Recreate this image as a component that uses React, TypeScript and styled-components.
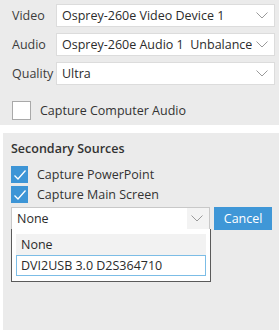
import styled, { createGlobalStyle } from 'styled-components'

const GlobalStyle = createGlobalStyle`
  body {
    margin: 0;
    background: #ffffff;
    font-family: "Open Sans", "Noto Sans", sans-serif;
    color: #333333;
  }
`

const Chevron = () => (
  <svg width="12" height="7" viewBox="0 0 12 7">
    <path d="M0.5 0.5 L6 6 L11.5 0.5" fill="none" stroke="#9a9a9a" strokeWidth="1" />
  </svg>
)

const Check = () => (
  <svg width="14" height="12" viewBox="0 0 14 12">
    <path d="M1.5 6.5 L5 10 L12.5 1.5" fill="none" stroke="#ffffff" strokeWidth="1.3" />
  </svg>
)

const sources = [
  { label: 'Video', value: 'Osprey-260e Video Device 1' },
  { label: 'Audio', value: 'Osprey-260e Audio 1  Unbalanced' },
  { label: 'Quality', value: 'Ultra' },
]

const App = () => {
  return (
    <Page>
      <GlobalStyle />
      <TopPanel>
        <FieldGrid>
          {sources.map((s) => (
            <Field key={s.label}>
              <Label>{s.label}</Label>
              <Select>
                <SelectText>{s.value}</SelectText>
                <Arrow>
                  <Chevron />
                </Arrow>
              </Select>
            </Field>
          ))}
        </FieldGrid>
        <CheckRow $big>
          <Box $checked={false} $size={19} />
          <CheckLabel>Capture Computer Audio</CheckLabel>
        </CheckRow>
      </TopPanel>

      <BottomPanel>
        <Heading>Secondary Sources</Heading>
        <CheckRow>
          <Box $checked $size={17}>
            <Check />
          </Box>
          <CheckLabel>Capture PowerPoint</CheckLabel>
        </CheckRow>
        <CheckRow>
          <Box $checked $size={17}>
            <Check />
          </Box>
          <CheckLabel>Capture Main Screen</CheckLabel>
        </CheckRow>
        <PickRow>
          <PickWrap>
            <Select $open>
              <SelectText>None</SelectText>
              <Arrow $open>
                <Chevron />
              </Arrow>
            </Select>
            <Menu>
              <MenuItem>None</MenuItem>
              <MenuItem $selected>DVI2USB 3.0 D2S364710</MenuItem>
            </Menu>
          </PickWrap>
          <Button>Cancel</Button>
        </PickRow>
      </BottomPanel>
    </Page>
  )
}

export default App

const Page = styled.div`
  width: 279px;
  height: 333px;
  display: flex;
  flex-direction: column;
  font-size: 12.5px;
`

const TopPanel = styled.div`
  background: #ebebeb;
  padding: 4px 4px 0 12px;
  height: 125px;
  box-sizing: border-box;
  display: flex;
  flex-direction: column;
`

const FieldGrid = styled.div`
  display: flex;
  flex-direction: column;
  gap: 6px;
`

const Field = styled.div`
  display: grid;
  grid-template-columns: 44px 1fr;
  align-items: center;
`

const Label = styled.div`
  color: #3c3c3c;
  font-size: 12.5px;
`

const Select = styled.div<{ $open?: boolean }>`
  display: flex;
  align-items: stretch;
  height: 23px;
  background: #ffffff;
  border: 1px solid ${(p) => (p.$open ? '#c8c8c8' : '#dcdcdc')};
  box-sizing: border-box;
  overflow: hidden;
`

const SelectText = styled.div`
  flex: 1;
  padding-left: 5px;
  line-height: 21px;
  white-space: pre;
  overflow: hidden;
  color: #2b2b2b;
`

const Arrow = styled.div<{ $open?: boolean }>`
  width: 20px;
  display: flex;
  align-items: center;
  justify-content: center;
  padding-right: 2px;
  background: ${(p) => (p.$open ? '#f3f3f3' : '#ffffff')};
`

const CheckRow = styled.div<{ $big?: boolean }>`
  display: flex;
  align-items: center;
  gap: 9px;
  margin-top: ${(p) => (p.$big ? '15px' : '3px')};
  height: ${(p) => (p.$big ? '20px' : '17px')};
`

const Box = styled.div<{ $checked: boolean; $size: number }>`
  width: ${(p) => p.$size}px;
  height: ${(p) => p.$size}px;
  box-sizing: border-box;
  display: flex;
  align-items: center;
  justify-content: center;
  background: ${(p) => (p.$checked ? '#3d95d6' : '#ffffff')};
  border: 1px solid ${(p) => (p.$checked ? '#3d95d6' : '#a9a9a9')};
`

const CheckLabel = styled.span`
  color: #333333;
  font-size: 12.5px;
`

const BottomPanel = styled.div`
  margin: 8px 0 3px 3px;
  flex: 1;
  background: #ebebeb;
  padding: 7px 7px 0 8px;
  display: flex;
  flex-direction: column;
`

const Heading = styled.div`
  font-weight: 600;
  font-size: 12.5px;
  color: #333333;
  margin-bottom: 6px;
`

const PickRow = styled.div`
  display: flex;
  gap: 4px;
  margin-top: 4px;
`

const PickWrap = styled.div`
  position: relative;
  width: 200px;
`

const Menu = styled.div`
  position: absolute;
  top: 22px;
  left: 0;
  width: 200px;
  box-sizing: border-box;
  background: #ffffff;
  border: 1px solid #5a5a5a;
  border-top: none;
  padding: 5px 4px 5px 4px;
  display: flex;
  flex-direction: column;
`

const MenuItem = styled.div<{ $selected?: boolean }>`
  height: 21px;
  line-height: 19px;
  padding-left: 4px;
  box-sizing: border-box;
  color: #2b2b2b;
  background: ${(p) => (p.$selected ? '#ffffff' : '#f2f2f2')};
  border: 1px solid ${(p) => (p.$selected ? '#7cbde6' : '#f2f2f2')};
`

const Button = styled.button`
  width: 58px;
  height: 23px;
  border: none;
  background: #3f97d7;
  color: #ffffff;
  font-family: inherit;
  font-size: 12.5px;
  padding: 0;
`
